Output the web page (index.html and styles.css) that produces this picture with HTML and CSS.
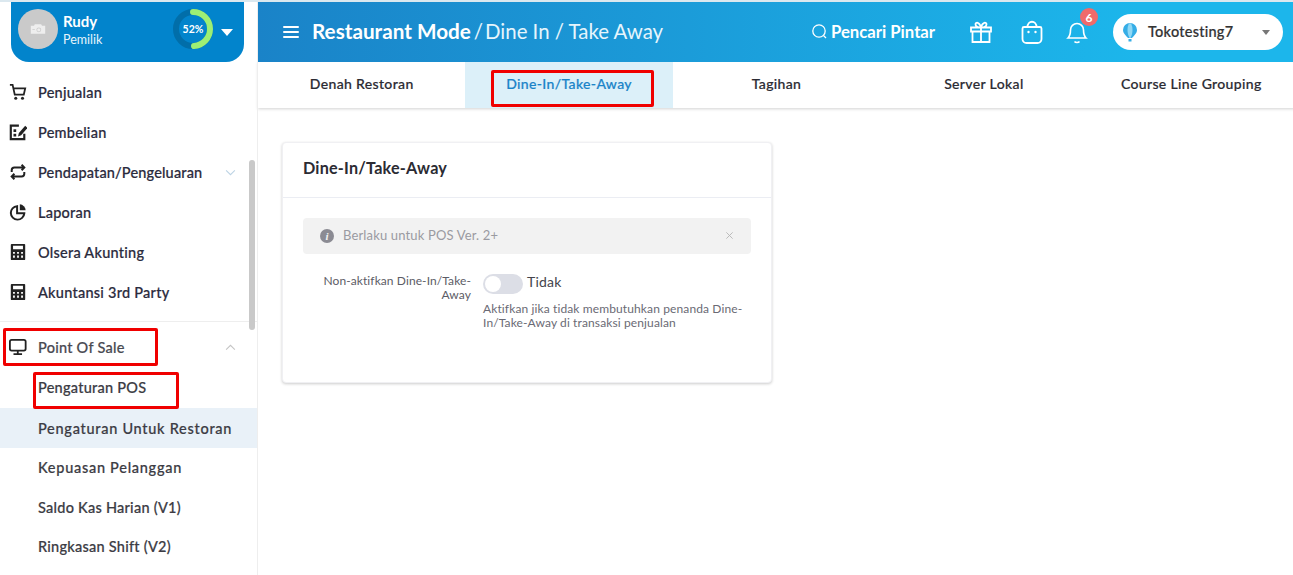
FILE: index.html
```html
<!DOCTYPE html>
<html lang="en">
  <head>
    <meta charset="UTF-8" />
    <meta name="viewport" content="width=device-width, initial-scale=1.0" />
    <title>Dine-In/Take-Away</title>
    <link rel="stylesheet" href="styles.css">
  </head>
  <body>
    <aside class="sidebar">
      <div class="profile">
        <div class="avatar">
          <svg width="16" height="12" viewBox="0 0 20 14"><path d="M1 3h4l1-2h8l1 2h4v10H1z" fill="#eee"/><circle cx="11" cy="8" r="3" fill="#ccc"/><circle cx="11" cy="8" r="2" fill="#eee"/><rect x="3" y="7" width="3" height="1" fill="#ccc"/></svg>
        </div>
        <div class="who">
          <div class="who-name">Rudy</div>
          <div class="who-role">Pemilik</div>
        </div>
        <div class="ring">
          <svg width="40" height="40" viewBox="0 0 40 40">
            <circle cx="20" cy="20" r="17" fill="none" stroke="#016ea9" stroke-width="6"/>
            <circle cx="20" cy="20" r="17" fill="none" stroke="#9def74" stroke-width="6" stroke-linecap="round" stroke-dasharray="52 107" transform="rotate(-90 20 20)"/>
          </svg>
          <span class="ring-text">52%</span>
        </div>
        <div class="caret"></div>
      </div>

      <nav class="menu">
        <a class="item">
          <svg class="icon" viewBox="0 0 20 20"><path d="M1 2h3l2.400 11h10L18 6H5" fill="none" stroke="#222" stroke-width="2"/><circle cx="7.500" cy="17" r="1.700" fill="#222"/><circle cx="15" cy="17" r="1.700" fill="#222"/></svg>
          Penjualan
        </a>
        <a class="item">
          <svg class="icon" viewBox="0 0 20 20"><path d="M11 3H2v15h15v-6" fill="none" stroke="#222" stroke-width="2.400"/><rect x="5" y="7" width="3" height="3" fill="#222"/><rect x="5" y="12" width="3" height="3" fill="#222"/><path d="M10 15l1-4 7-8 2.500 2.500-7 8z" fill="#222"/></svg>
          Pembelian
        </a>
        <a class="item">
          <svg class="icon" viewBox="0 0 20 20"><path d="M3 10V8a3 3 0 0 1 3-3h11M14 2l3 3-3 3M17 10v2a3 3 0 0 1-3 3H3M6 12l-3 3 3 3" fill="none" stroke="#222" stroke-width="2.200"/></svg>
          <span class="tight">Pendapatan/Pengeluaran</span>
          <svg class="chev" viewBox="0 0 12 8"><path d="M1 1.500l5 5 5-5" fill="none" stroke="#bcd3e4" stroke-width="1.200"/></svg>
        </a>
        <a class="item">
          <svg class="icon" viewBox="0 0 20 20"><path d="M9 3.500a7.500 7.500 0 1 0 8 8H9z" fill="none" stroke="#222" stroke-width="2.200"/><path d="M12 1.500a7 7 0 0 1 6.500 6.500H12z" fill="#222"/></svg>
          Laporan
        </a>
        <a class="item">
          <svg class="icon" viewBox="0 0 20 20"><path fill-rule="evenodd" d="M3 1h14a1 1 0 0 1 1 1v16a1 1 0 0 1-1 1H3a1 1 0 0 1-1-1V2a1 1 0 0 1 1-1zm1.500 2v4h11V3zm0 7v2h2v-2zm4.500 0v2h2v-2zm4.500 0v2h2v-2zm-9 4v2.500h2V14zm4.500 0v2.500h2V14zm4.500 0v2.500h2V14z" fill="#222"/></svg>
          Olsera Akunting
        </a>
        <a class="item">
          <svg class="icon" viewBox="0 0 20 20"><path fill-rule="evenodd" d="M3 1h14a1 1 0 0 1 1 1v16a1 1 0 0 1-1 1H3a1 1 0 0 1-1-1V2a1 1 0 0 1 1-1zm1.500 2v4h11V3zm0 7v2h2v-2zm4.500 0v2h2v-2zm4.500 0v2h2v-2zm-9 4v2.500h2V14zm4.500 0v2.500h2V14zm4.500 0v2.500h2V14z" fill="#222"/></svg>
          Akuntansi 3rd Party
        </a>
        <div class="menu-line"></div>
        <a class="item item-open">
          <svg class="icon" viewBox="0 0 20 20"><rect x="1" y="2" width="17.500" height="12" rx="2" fill="none" stroke="#222" stroke-width="2"/><path d="M9.750 14v4M5 18h9.500" stroke="#222" stroke-width="2"/></svg>
          Point Of Sale
          <svg class="chev" viewBox="0 0 12 8"><path d="M1 6.500l5-5 5 5" fill="none" stroke="#c4c4c4" stroke-width="1.200"/></svg>
        </a>
        <a class="sub">Pengaturan POS</a>
        <a class="sub sub-active sub-wide">Pengaturan Untuk Restoran</a>
        <a class="sub sub-wide">Kepuasan Pelanggan</a>
        <a class="sub">Saldo Kas Harian (V1)</a>
        <a class="sub">Ringkasan Shift (V2)</a>
      </nav>
      <div class="scrollbar"></div>
    </aside>

    <div class="main">
      <header class="topbar">
        <div class="burger"><span></span><span></span><span></span></div>
        <div class="crumb"><b>Restaurant Mode</b><span class="crumb-sep">/</span><span>Dine In / Take Away</span></div>
        <div class="smart">
          <svg width="17" height="17" viewBox="0 0 17 17"><circle cx="8" cy="8" r="6.200" fill="none" stroke="#fff" stroke-width="1.300"/><path d="M12.500 12.500l2.500 2.500" stroke="#fff" stroke-width="1.300"/></svg>
          Pencari Pintar
        </div>
        <svg class="top-icon gift" viewBox="0 0 24 24"><path d="M2 7.500h20v4H2zM3.500 11.500v10.500h17V11.500M12 7.500V22M12 7.500C9 7.500 6.500 6.500 6.500 4.200 6.500 2 10.500 1.500 12 7.500zM12 7.500c3 0 5.500-1 5.500-3.300C17.500 2 13.500 1.500 12 7.500z" fill="none" stroke="#fff" stroke-width="1.800"/></svg>
        <svg class="top-icon bag" viewBox="0 0 24 24"><path d="M4 7h16a1.500 1.500 0 0 1 1.500 1.500V19a4 4 0 0 1-4 4h-11a4 4 0 0 1-4-4V8.500A1.500 1.500 0 0 1 4 7zM7.500 7c0-7 9-7 9 0" fill="none" stroke="#fff" stroke-width="1.800"/><circle cx="8.500" cy="12" r="1.200" fill="#fff"/><circle cx="15.500" cy="12" r="1.200" fill="#fff"/></svg>
        <div class="bell">
          <svg width="22" height="26" viewBox="0 0 22 26"><path d="M2 19c2-2 2.500-4 2.500-8a6.500 6.500 0 0 1 13 0c0 4 .5 6 2.500 8z" fill="none" stroke="#fff" stroke-width="1.600"/><path d="M8.500 22.500c1 1.300 4 1.300 5 0" fill="none" stroke="#fff" stroke-width="1.600"/></svg>
          <span class="badge">6</span>
        </div>
        <div class="store">
          <svg width="16" height="20" viewBox="0 0 16 20"><path d="M8 1a7 7 0 0 1 7 7c0 3.500-3.500 6-5 8H6C4.500 14 1 11.500 1 8a7 7 0 0 1 7-7z" fill="#35ade6"/><path d="M8 1c2 1.500 2.500 4 2.500 7 0 3-1 6-2 8H7.500c-1-2-2-5-2-8 0-3 .5-5.500 2.500-7z" fill="#8fd8f5"/><rect x="6.500" y="17" width="3" height="2.500" fill="#35ade6"/></svg>
          <span class="store-name">Tokotesting7</span>
          <span class="store-caret"></span>
        </div>
      </header>

      <div class="tabs">
        <a class="tab">Denah Restoran</a>
        <a class="tab tab-active">Dine-In/Take-Away</a>
        <a class="tab">Tagihan</a>
        <a class="tab">Server Lokal</a>
        <a class="tab">Course Line Grouping</a>
      </div>

      <section class="content">
        <div class="card">
          <div class="card-head">Dine-In/Take-Away</div>
          <div class="card-body">
            <div class="alert">
              <span class="alert-icon">i</span>
              <span class="alert-text">Berlaku untuk POS Ver. 2+</span>
              <svg class="alert-close" viewBox="0 0 10 10"><path d="M1.500 1.500l7 7M8.500 1.500l-7 7" stroke="#b5b5b5" stroke-width="1"/></svg>
            </div>
            <div class="form-row">
              <label class="form-label">Non-aktifkan Dine-In/Take-Away</label>
              <div class="form-field">
                <div class="switch-line">
                  <span class="switch"><span class="knob"></span></span>
                  <span class="switch-text">Tidak</span>
                </div>
                <p class="help">Aktifkan jika tidak membutuhkan penanda Dine-In/Take-Away di transaksi penjualan</p>
              </div>
            </div>
          </div>
        </div>
      </section>
    </div>

    <div class="mark mark-tab"></div>
    <div class="mark mark-pos"></div>
    <div class="mark mark-setting"></div>
  </body>
</html>
```

FILE: styles.css
```css
* {
  box-sizing: border-box;
}
html,
body {
  height: 100%;
}
body {
  margin: 0;
  display: flex;
  height: 575px;
  overflow: hidden;
  padding-top: 2px;
  background: #fff;
  font-family: "Lato", "Noto Sans", sans-serif;
  color: #2b2b33;
  position: relative;
}
body::before {
  content: "";
  position: absolute;
  left: 0;
  right: 0;
  top: 0;
  height: 2px;
  background: #dbe8ef;
}
.sidebar {
  width: 258px;
  flex: none;
  border-right: 1px solid #eeeeee;
  position: relative;
  overflow: hidden;
}
.profile {
  margin: 0 13px 0 11px;
  height: 60px;
  background: #0284cc;
  border-radius: 0 0 18px 18px;
  display: flex;
  align-items: center;
  padding: 0 11px 6px 7px;
  color: #fff;
}
.avatar {
  width: 40px;
  height: 40px;
  border-radius: 50%;
  background: #cacaca;
  display: flex;
  align-items: center;
  justify-content: center;
}
.who {
  margin-left: 5px;
  padding-top: 3px;
  flex: 1;
}
.who-name {
  font-size: 15px;
  font-weight: 700;
  line-height: 19px;
}
.who-role {
  font-size: 12.5px;
  line-height: 18px;
  color: #e6f4fb;
}
.ring {
  position: relative;
  width: 40px;
  height: 40px;
  display: flex;
  align-items: center;
  justify-content: center;
}
.ring svg {
  position: absolute;
  left: 0;
  top: 0;
}
.ring-text {
  position: relative;
  font-size: 10.5px;
  font-weight: 700;
}
.caret {
  margin: 6px 0 0 8px;
  border-left: 6.5px solid transparent;
  border-right: 6.5px solid transparent;
  border-top: 7px solid #fff;
}
.menu {
  padding-top: 10px;
}
.item {
  display: flex;
  align-items: center;
  height: 40px;
  padding-left: 9px;
  font-size: 14.5px;
  font-weight: 500;
  letter-spacing: 0.25px;
  color: #2b2b3d;
  -webkit-text-stroke: 0.2px;
}
.tight {
  letter-spacing: 0.16px;
}
.icon {
  width: 18px;
  height: 18px;
  margin-right: 11px;
  flex: none;
}
.chev {
  width: 11px;
  height: 7px;
  margin-left: auto;
  margin-right: 21px;
}
.menu-line {
  height: 1px;
  background: #eeeeee;
  margin-top: 9px;
}
.item-open {
  margin: 5px 0 1px;
  color: #4a4a52;
}
.sub {
  display: flex;
  align-items: center;
  height: 39.75px;
  padding-left: 38px;
  font-size: 14.5px;
  font-weight: 500;
  letter-spacing: 0.25px;
  color: #3c3c44;
  -webkit-text-stroke: 0.2px;
}
.sub-wide {
  padding-top: 1px;
  letter-spacing: 0.72px;
}
.sub-active {
  background: #e9f1f8;
}
.scrollbar {
  position: absolute;
  left: 249px;
  top: 158px;
  width: 6px;
  height: 170px;
  border-radius: 3px;
  background: #c9c9c9;
}
.main {
  flex: 1;
  min-width: 0;
  display: flex;
  flex-direction: column;
}
.topbar {
  height: 60px;
  flex: none;
  display: flex;
  align-items: center;
  background: linear-gradient(90deg, #1a83c8, #1cb6eb 85%);
  color: #fff;
  padding-left: 25px;
  position: relative;
  z-index: 2;
}
.burger {
  width: 16px;
  display: flex;
  flex-direction: column;
  gap: 3px;
}
.burger span {
  height: 2px;
  background: #fff;
  border-radius: 1px;
}
.crumb {
  margin-left: 13px;
  padding-bottom: 3px;
  font-size: 20.4px;
  width: 499px;
  white-space: nowrap;
  color: #e6f5fc;
}
.crumb b {
  color: #fff;
  font-size: 20.7px;
  font-weight: 700;
}
.crumb-sep {
  margin: 0 2px 0 3px;
}
.smart {
  display: flex;
  align-items: center;
  gap: 3px;
  padding-bottom: 1px;
  font-size: 16.7px;
  font-weight: 700;
  width: 158px;
  white-space: nowrap;
}
.top-icon {
  width: 24px;
  height: 24px;
  flex: none;
  margin-bottom: 1px;
}
.bag {
  margin-left: 27px;
}
.bell {
  margin-left: 22px;
  position: relative;
  width: 22px;
  height: 26px;
}
.badge {
  position: absolute;
  left: 14px;
  top: -11px;
  width: 18px;
  height: 18px;
  border-radius: 50%;
  background: #f06a6a;
  font-size: 12px;
  font-weight: 700;
  display: flex;
  align-items: center;
  justify-content: center;
}
.store {
  margin-left: 25px;
  width: 170px;
  height: 36px;
  border-radius: 18px;
  background: #fff;
  display: flex;
  align-items: center;
  padding: 0 13px 0 9px;
  color: #333;
}
.store-name {
  margin-left: 10px;
  padding-bottom: 2px;
  font-size: 14.5px;
  font-weight: 500;
  letter-spacing: 0.25px;
  -webkit-text-stroke: 0.2px;
}
.store-caret {
  margin-left: auto;
  border-left: 4.5px solid transparent;
  border-right: 4.5px solid transparent;
  border-top: 5px solid #777;
}
.tabs {
  height: 46px;
  flex: none;
  margin-right: -2px;
  display: grid;
  grid-template-columns: repeat(5, 1fr);
  background: #fff;
  box-shadow: 0 1px 3px rgba(0, 0, 0, 0.18);
}
.tab {
  display: flex;
  align-items: center;
  justify-content: center;
  padding-bottom: 4px;
  font-size: 14px;
  font-weight: 500;
  letter-spacing: 0.35px;
  color: #2b2b33;
  -webkit-text-stroke: 0.2px;
}
.tab-active {
  background: #dcf0f9;
  color: #1a84c8;
}
.content {
  flex: 1;
  padding: 34px 25px 0 24px;
}
.card {
  width: 490px;
  height: 241px;
  background: #fff;
  border-radius: 4px;
  border: 1px solid #f0f0f3;
  box-shadow: 0 1px 3px rgba(0, 0, 0, 0.2);
}
.card-head {
  height: 55px;
  padding: 0 20px 5px;
  display: flex;
  align-items: center;
  border-bottom: 1px solid #ebedf3;
  font-size: 16.2px;
  font-weight: 700;
  letter-spacing: 0.2px;
  color: #2b2b33;
}
.card-body {
  padding: 20px 20px;
}
.alert {
  height: 36px;
  background: #f2f2f2;
  border-radius: 4px;
  display: flex;
  align-items: center;
  padding: 0 17px 2px;
}
.alert-icon {
  width: 14px;
  height: 14px;
  margin-top: 2px;
  border-radius: 50%;
  background: #8b8b93;
  color: #f2f2f2;
  font: italic 700 11px "Liberation Serif", serif;
  display: flex;
  align-items: center;
  justify-content: center;
}
.alert-text {
  margin-left: 9px;
  font-size: 13px;
  letter-spacing: 0.15px;
  color: #9a9aa1;
}
.alert-close {
  width: 9px;
  height: 9px;
  margin-left: auto;
}
.form-row {
  display: flex;
  margin-top: 19px;
}
.form-label {
  width: 168px;
  flex: none;
  margin-top: 1px;
  text-align: right;
  font-size: 12px;
  line-height: 14px;
  letter-spacing: 0.09px;
  color: #5c5c66;
}
.form-field {
  margin-left: 12px;
  flex: 1;
}
.switch-line {
  display: flex;
  align-items: center;
  gap: 4px;
}
.switch {
  width: 40px;
  height: 20px;
  border-radius: 10px;
  background: #dcdee6;
  padding: 2px;
  display: block;
}
.knob {
  display: block;
  width: 16px;
  height: 16px;
  border-radius: 50%;
  background: #fff;
}
.switch-text {
  padding-bottom: 4px;
  font-size: 14px;
  letter-spacing: 0.2px;
  color: #44444c;
}
.help {
  margin: 8px 0 0;
  font-size: 12px;
  line-height: 14px;
  letter-spacing: 0.12px;
  color: #6a6a74;
}
.mark {
  position: absolute;
  border: 3px solid #f00000;
  border-radius: 2px;
  z-index: 5;
}
.mark-tab {
  left: 491px;
  top: 70px;
  width: 163px;
  height: 37px;
}
.mark-pos {
  left: 3px;
  top: 328px;
  width: 155px;
  height: 38px;
}
.mark-setting {
  left: 33px;
  top: 372px;
  width: 146px;
  height: 37px;
}
```
